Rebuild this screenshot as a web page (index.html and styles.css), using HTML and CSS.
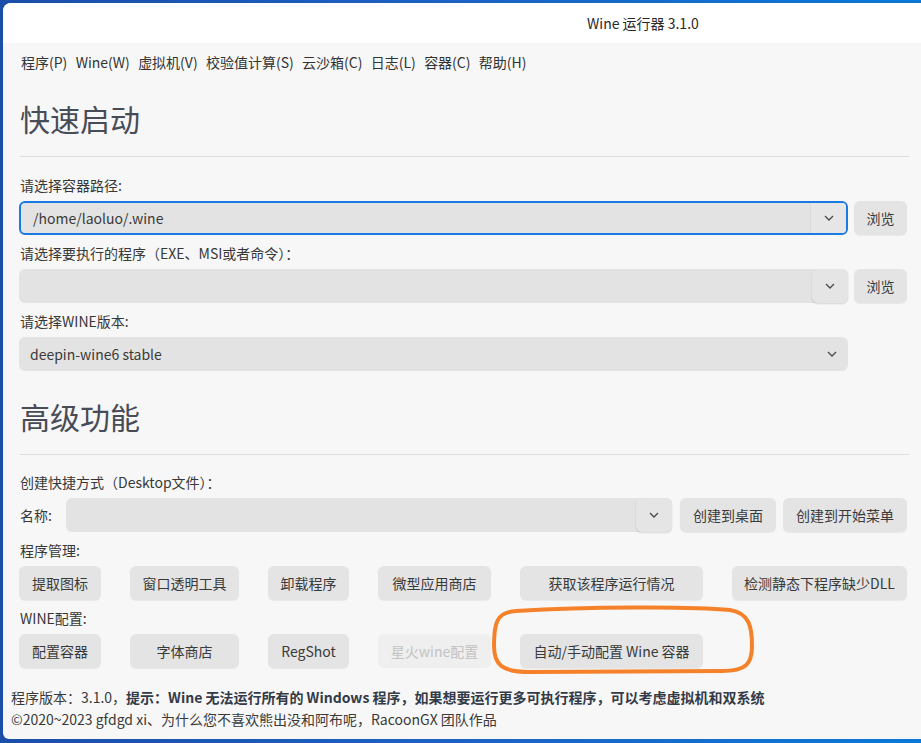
FILE: index.html
```html
<!DOCTYPE html>
<html lang="zh-CN">
<head>
<meta charset="utf-8">
<title>Wine 运行器 3.1.0</title>
<link rel="stylesheet" href="styles.css">
</head>
<body>
<div class="desktop">
  <div class="window">
    <div class="titlebar"><span class="title">Wine 运行器 3.1.0</span></div>
    <nav class="menubar">
      <span class="menu-item">程序(P)</span>
      <span class="menu-item">Wine(W)</span>
      <span class="menu-item">虚拟机(V)</span>
      <span class="menu-item">校验值计算(S)</span>
      <span class="menu-item">云沙箱(C)</span>
      <span class="menu-item">日志(L)</span>
      <span class="menu-item">容器(C)</span>
      <span class="menu-item">帮助(H)</span>
    </nav>
    <main class="content">
      <h1 class="section-title">快速启动</h1>
      <hr class="rule">
      <div class="label">请选择容器路径:</div>
      <div class="field-row">
        <div class="combo focused">
          <span class="combo-value">/home/laoluo/.wine</span>
          <span class="combo-drop flat"><svg class="chev" viewBox="0 0 10 6" width="10" height="6"><polyline points="1,1 5,5 9,1"/></svg></span>
        </div>
        <button class="btn">浏览</button>
      </div>
      <div class="label">请选择要执行的程序（EXE、MSI或者命令）：</div>
      <div class="field-row">
        <div class="combo">
          <span class="combo-value"></span>
          <span class="combo-drop raised"><svg class="chev" viewBox="0 0 10 6" width="10" height="6"><polyline points="1,1 5,5 9,1"/></svg></span>
        </div>
        <button class="btn">浏览</button>
      </div>
      <div class="label">请选择WINE版本:</div>
      <div class="field-row">
        <div class="combo plain">
          <span class="combo-value narrow">deepin-wine6 stable</span>
          <span class="combo-arrow"><svg class="chev" viewBox="0 0 10 6" width="10" height="6"><polyline points="1,1 5,5 9,1"/></svg></span>
        </div>
      </div>

      <h1 class="section-title second">高级功能</h1>
      <hr class="rule tight">
      <div class="label">创建快捷方式（Desktop文件）：</div>
      <div class="name-row">
        <span class="inline-label">名称:</span>
        <div class="combo grow">
          <span class="combo-value"></span>
          <span class="combo-drop raised"><svg class="chev" viewBox="0 0 10 6" width="10" height="6"><polyline points="1,1 5,5 9,1"/></svg></span>
        </div>
        <button class="btn wide">创建到桌面</button>
        <button class="btn wide">创建到开始菜单</button>
      </div>
      <div class="label">程序管理:</div>
      <div class="button-grid">
        <button class="btn">提取图标</button>
        <button class="btn">窗口透明工具</button>
        <button class="btn">卸载程序</button>
        <button class="btn">微型应用商店</button>
        <button class="btn">获取该程序运行情况</button>
        <button class="btn">检测静态下程序缺少DLL</button>
      </div>
      <div class="label">WINE配置:</div>
      <div class="button-grid">
        <button class="btn">配置容器</button>
        <button class="btn">字体商店</button>
        <button class="btn">RegShot</button>
        <button class="btn disabled">星火wine配置</button>
        <button class="btn">自动/手动配置 Wine 容器</button>
      </div>
      <footer class="footer">
        <div class="footer-line">程序版本：3.1.0，<b>提示：Wine 无法运行所有的 Windows 程序，如果想要运行更多可执行程序，可以考虑虚拟机和双系统</b></div>
        <div class="footer-line">©2020~2023 gfdgd xi、为什么您不喜欢熊出没和阿布呢，RacoonGX 团队作品</div>
      </footer>
    </main>
  </div>
  <svg class="annotation" viewBox="0 0 921 743" width="921" height="743">
    <path d="M516 611 C585 607 690 606 730 610 C750 613 752 628 752 646 C752 664 746 671 722 671 L530 672 C502 672 494 665 494 646 C494 624 496 612 516 611 Z"/>
  </svg>
</div>
</body>
</html>
```

FILE: styles.css
```css
* {
  box-sizing: border-box;
}

html,
body {
  margin: 0;
  padding: 0;
}

body {
  font-family: "Noto Sans CJK SC", "Noto Sans", sans-serif;
  font-size: 14px;
  color: #383838;
  background: #1b4fa6;
  overflow: hidden;
}

.desktop {
  position: relative;
  width: 921px;
  height: 743px;
  padding: 3px 0 0 3px;
  background: linear-gradient(90deg, #1a4ea8 0%, #1c62c4 50%, #0b78d6 100%);
}

.window {
  width: 918px;
  height: 736px;
  background: #f7f7f7;
  border-top-left-radius: 8px;
  border-bottom-left-radius: 6px;
  overflow: hidden;
  display: flex;
  flex-direction: column;
}

.titlebar {
  height: 40px;
  flex: none;
  background: #ffffff;
  padding-left: 584px;
  line-height: 40px;
  font-size: 14px;
  color: #2a2a2a;
}

.menubar {
  height: 38px;
  flex: none;
  display: flex;
  align-items: center;
  gap: 8.3px;
  padding-left: 18px;
  color: #333333;
}

.content {
  display: flex;
  flex-direction: column;
  padding: 17px 14px 0 16px;
}

.section-title {
  margin: 0;
  font-size: 30px;
  line-height: 40px;
  height: 40px;
  font-weight: 400;
  color: #474c56;
  padding-left: 1px;
}

.section-title.second {
  margin-top: 25px;
}

.rule {
  border: 0;
  border-top: 1px solid #dddddd;
  height: 0;
  margin: 18px -2px 10px 1px;
}

.rule.tight {
  margin-bottom: 9px;
}

.label {
  margin-top: 10px;
  margin-bottom: 4px;
  height: 20px;
  line-height: 17px;
  padding-left: 1px;
}

.field-row {
  display: grid;
  grid-template-columns: 1fr 53px;
  column-gap: 6px;
}

.combo {
  height: 34px;
  display: flex;
  align-items: stretch;
  background: #e3e3e3;
  border-radius: 6px;
}

.combo.focused {
  border: 2px solid #1b7ae2;
}

.combo.grow {
  flex: 1;
}

.combo-value {
  flex: 1;
  display: flex;
  align-items: center;
  padding-left: 12px;
  color: #3a3a3a;
}

.combo-value.narrow {
  padding-left: 11px;
}

.combo-drop {
  width: 36px;
  flex: none;
  display: flex;
  align-items: center;
  justify-content: center;
}

.combo-drop.flat {
  background: #e6e6e6;
  border-left: 1px solid #d9d9d9;
  border-radius: 0 4px 4px 0;
}

.combo-drop.raised {
  background: #e5e5e5;
  border-radius: 6px;
  box-shadow: 0 1px 2px rgba(0, 0, 0, 0.14);
}

.combo-arrow {
  width: 32px;
  flex: none;
  display: flex;
  align-items: center;
  justify-content: center;
}

.chev {
  display: block;
}

.chev polyline {
  fill: none;
  stroke: #4a4a4a;
  stroke-width: 1.3;
}

.btn {
  height: 34px;
  border: 0;
  border-radius: 6px;
  background: #e4e4e4;
  color: #3a3a3a;
  font-family: inherit;
  font-size: 14px;
  padding: 0;
  box-shadow: 0 1px 1px rgba(0, 0, 0, 0.06);
}

.btn.wide {
  padding: 0 13px;
  flex: none;
}

.btn.disabled {
  background: #efefef;
  color: #c3c3c3;
  box-shadow: none;
}

.name-row {
  display: flex;
  align-items: center;
  gap: 7px;
}

.inline-label {
  width: 40px;
  padding-left: 1px;
}

.name-row .combo {
  margin-right: 1px;
}

.button-grid {
  display: grid;
  grid-template-columns: 82px 109px 81px 113px 183px 1fr;
  column-gap: 29px;
}

.footer {
  margin: 18px 0 0 -8px;
}

.footer-line {
  height: 22px;
  line-height: 22px;
  white-space: nowrap;
  color: #3a3a3a;
}

.footer-line b {
  color: #333a48;
  font-weight: 700;
}

.annotation {
  position: absolute;
  left: 0;
  top: 0;
  pointer-events: none;
}

.annotation path {
  fill: none;
  stroke: #f5822a;
  stroke-width: 4;
  stroke-linejoin: round;
}
```
